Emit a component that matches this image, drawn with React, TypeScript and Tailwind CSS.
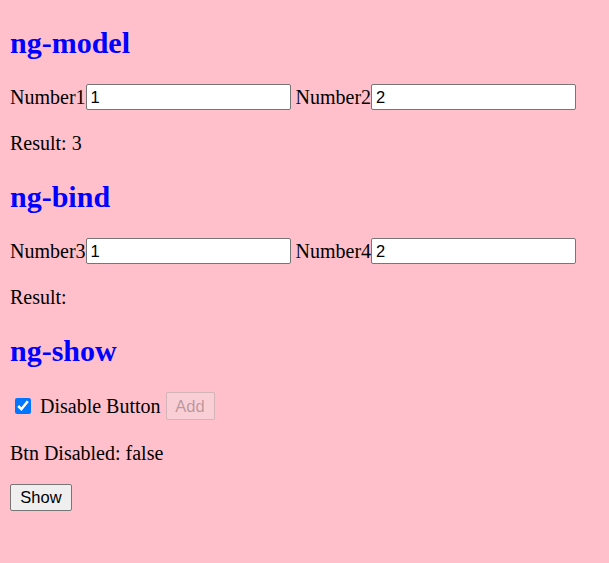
export default function App() {
  const serif = "font-['Liberation_Serif',serif]";
  const inputCls =
    "w-[205px] h-[26px] px-[4px] border border-[#767676] rounded-[2px] bg-white text-[16.5px] text-black font-['Liberation_Sans',Arial,sans-serif] outline-none";
  const heading = `h-[28px] leading-[28px] text-[30px] font-bold text-[#0000ff] ${serif}`;

  return (
    <div className={`min-h-screen bg-[#ffc0cb] pt-[29px] px-[10px] text-[20px] text-black ${serif}`}>
      <h2 className={heading}>ng-model</h2>
      <div className="mt-[27px] flex items-center h-[26px]">
        <span>Number1</span>
        <input className={inputCls} defaultValue="1" />
        <span className="ml-[5px]">Number2</span>
        <input className={inputCls} defaultValue="2" />
      </div>
      <p className="mt-[24px] h-[18px] leading-[18px]">Result: 3</p>

      <h2 className={`mt-[31px] ${heading}`}>ng-bind</h2>
      <div className="mt-[27px] flex items-center h-[26px]">
        <span>Number3</span>
        <input className={inputCls} defaultValue="1" />
        <span className="ml-[5px]">Number4</span>
        <input className={inputCls} defaultValue="2" />
      </div>
      <p className="mt-[24px] h-[18px] leading-[18px]">Result:</p>

      <h2 className={`mt-[31px] ${heading}`}>ng-show</h2>
      <div className="mt-[27px] flex items-center h-[28px]">
        <input
          type="checkbox"
          defaultChecked
          className="ml-[5px] mr-[9px] w-[16px] h-[16px] accent-[#0075ff]"
        />
        <span>Disable Button</span>
        <button
          disabled
          className="ml-[5px] w-[49px] h-[28px] rounded-[2px] border border-[rgba(118,118,118,0.3)] bg-[rgba(239,239,239,0.3)] text-[16.5px] text-[rgba(16,16,16,0.3)] font-['Liberation_Sans',Arial,sans-serif]"
        >
          Add
        </button>
      </div>
      <p className="mt-[24px] h-[18px] leading-[18px]">Btn Disabled: false</p>
      <button className="mt-[22px] w-[62px] h-[27px] rounded-[2px] border border-[#767676] bg-[#efefef] text-[16.5px] text-black font-['Liberation_Sans',Arial,sans-serif]">
        Show
      </button>
    </div>
  );
}
